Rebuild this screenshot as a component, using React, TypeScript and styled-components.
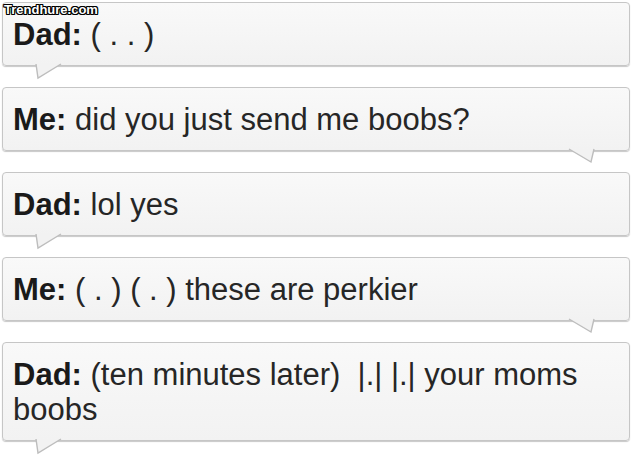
import styled, { createGlobalStyle } from 'styled-components';

const GlobalStyle = createGlobalStyle`
  html, body {
    margin: 0;
    padding: 0;
    background: #ffffff;
  }
  body {
    font-family: "Liberation Sans", Arial, sans-serif;
  }
`;

const Page = styled.div`
  position: relative;
  width: 640px;
  height: 463px;
  overflow: hidden;
  background: #ffffff;
`;

const Watermark = styled.div`
  position: absolute;
  top: 2px;
  left: 4px;
  z-index: 5;
  font-family: "Liberation Sans", Arial, sans-serif;
  font-weight: 700;
  font-size: 13px;
  color: #ffffff;
  text-shadow:
    -1px -1px 0 #000, 1px -1px 0 #000, -1px 1px 0 #000, 1px 1px 0 #000,
    0 1px 0 #000, 0 -1px 0 #000, 1px 0 0 #000, -1px 0 0 #000;
`;

const Thread = styled.div`
  display: flex;
  flex-direction: column;
  gap: 21px;
  padding: 2px 10px 0 2px;
`;

const Bubble = styled.div`
  position: relative;
  box-sizing: border-box;
  padding: 14px 14px 13px 10px;
  background: linear-gradient(#f9f9f9, #f2f2f2);
  border: 1px solid #c6c6c6;
  border-radius: 4px;
  box-shadow: 0 1px 1px rgba(0, 0, 0, 0.22);
  color: #262626;
  font-size: 31px;
  line-height: 35px;
`;

const Name = styled.b`
  font-weight: 700;
  color: #1a1a1a;
`;

const Body = styled.span`
  color: #262626;
`;

const Tail = styled.svg<{ $side: 'left' | 'right' }>`
  position: absolute;
  bottom: -14px;
  ${({ $side }) => ($side === 'left' ? 'left: 31px;' : 'right: 33px;')}
  width: 29px;
  height: 15px;
  overflow: visible;
`;

type Msg = { from: 'Dad' | 'Me'; text: string };

const messages: Msg[] = [
  { from: 'Dad', text: '( . . )' },
  { from: 'Me', text: 'did you just send me boobs?' },
  { from: 'Dad', text: 'lol yes' },
  { from: 'Me', text: '( . ) ( . ) these are perkier' },
  { from: 'Dad', text: '(ten minutes later)\u00a0 |.| |.| your moms boobs' },
];

const BubbleTail = ({ side }: { side: 'left' | 'right' }) => (
  <Tail $side={side} viewBox="0 0 29 15">
    {side === 'left' ? (
      <>
        <path d="M2 0 L4 14 L27 0 Z" fill="#f2f2f2" />
        <path d="M2 0 L4 14 L27 0" fill="none" stroke="#bdbdbd" strokeWidth="1.4" />
      </>
    ) : (
      <>
        <path d="M2 0 L24 13 L27 0 Z" fill="#f2f2f2" />
        <path d="M2 0 L24 13 L27 0" fill="none" stroke="#bdbdbd" strokeWidth="1.4" />
      </>
    )}
  </Tail>
);

export default function App() {
  return (
    <Page>
      <GlobalStyle />
      <Watermark>Trendhure.com</Watermark>
      <Thread>
        {messages.map((m, i) => (
          <Bubble key={i}>
            <Name>{m.from}:</Name> <Body>{m.text}</Body>
            <BubbleTail side={m.from === 'Dad' ? 'left' : 'right'} />
          </Bubble>
        ))}
      </Thread>
    </Page>
  );
}
